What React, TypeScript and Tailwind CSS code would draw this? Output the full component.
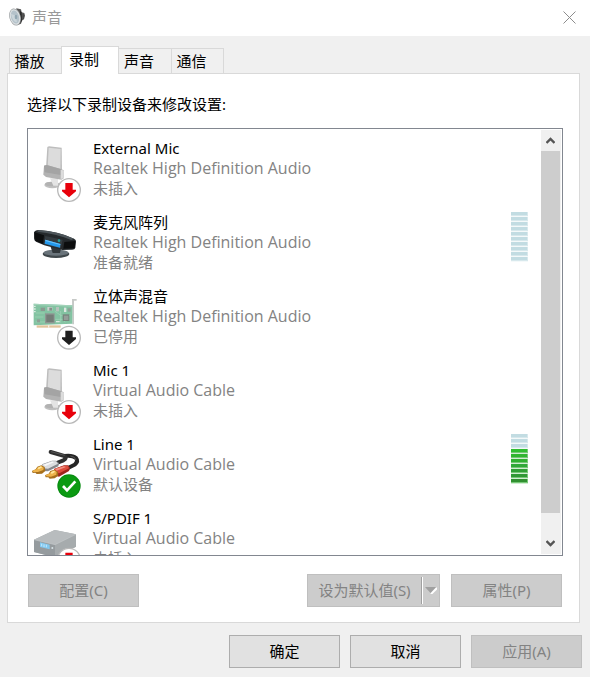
import { useRef, useState } from "react";
import type { ReactNode } from "react";

type BadgeKind = "unplugged" | "disabled" | "default";

function Badge({ kind, x, y }: { kind: BadgeKind; x: number; y: number }) {
  if (kind === "default") {
    return (
      <g transform={`translate(${x} ${y})`}>
        <circle r="35" fill="#078a10" />
        <circle r="32" fill="#0b9a12" />
        <path d="M-18 0 L-6 13 L19 -14" fill="none" stroke="#fff" strokeWidth="8" />
      </g>
    );
  }
  return (
    <g transform={`translate(${x} ${y})`}>
      <circle r="34" fill="#fff" stroke="#b9b9b9" strokeWidth="4" />
      <path
        d="M-11 -21 H11 V-1 H21 V4 L0 22 L-21 4 V-1 H-11 Z"
        fill={kind === "unplugged" ? "#e8000b" : "#1f1f1f"}
      />
    </g>
  );
}

function DeviceIcon({ viewBox, children }: { viewBox: string; children: ReactNode }) {
  return (
    <svg viewBox={viewBox} className="h-16 w-[52px] shrink-0" aria-hidden="true">
      {children}
    </svg>
  );
}

function MicIcon() {
  return (
    <DeviceIcon viewBox="36 39 156 192">
      <ellipse cx="97" cy="180" rx="24" ry="10" fill="#c0c0c0" />
      <ellipse cx="95" cy="177" rx="20" ry="7" fill="#b2b2b2" />
      <path d="M90 160 H114 V182 H100 Z" fill="#e4e4e4" />
      <path d="M82 66 L87 64 L125 68 L126 136 L78 128 Z" fill="#bdbdbd" />
      <path d="M86 68 L122 72 L121 134 L83 128 Z" fill="#dcdcdc" />
      <path d="M72 122 L80 120 L122 132 L132 136 L131 160 L124 164 L78 156 L70 149 Z" fill="#b3b3b3" />
      <path d="M72 122 L80 120 L122 132 L122 150 L74 142 Z" fill="#a4a4a4" />
      <path d="M122 135 L132 136 L131 160 L122 162 Z" fill="#dcdcdc" />
      <Badge kind="unplugged" x={147} y={195} />
    </DeviceIcon>
  );
}

function MicArrayIcon() {
  return (
    <DeviceIcon viewBox="36 261 156 192">
      <ellipse cx="108" cy="387" rx="40" ry="12" fill="#3f474b" />
      <ellipse cx="108" cy="383" rx="37" ry="9" fill="#69737a" />
      <path d="M92 366 H124 L120 384 H98 Z" fill="#30363a" />
      <path d="M42 322 Q44 316 56 315 Q112 318 162 341 Q169 344 168 350 L166 368 Q164 375 154 374 L127 375 L73 361 L48 350 Q42 347 42 340 Z" fill="#25292c" />
      <path d="M56 315 Q112 318 162 341 L154 345 Q108 325 52 320 Z" fill="#4d555a" />
      <path d="M44 322 L72 331 L69 357 L46 347 Z" fill="#0c0d0e" />
      <path d="M133 351 L166 348 L164 370 L130 371 Z" fill="#0c0d0e" />
      <path d="M76 333 L128 344 L122 370 L71 358 Z" fill="#343b40" />
      <path d="M76 344 L121 357 L120 368 L74 356 Z" fill="#2398ec" />
      <path d="M76 344 L121 357 L121 360 L76 348 Z" fill="#67c2fa" />
      <circle cx="117" cy="347" r="4" fill="#259e9c" />
    </DeviceIcon>
  );
}

function SoundCardIcon() {
  return (
    <DeviceIcon viewBox="36 3 156 192">
      <path d="M156 42 H170 V47 H162 V118 H157 Z" fill="#c6c9c7" />
      <path d="M41 56 L157 61 V116 L41 121 Z" fill="#83c3a2" />
      <path d="M41 56 L157 61 V65 L41 60 Z" fill="#a2d3b9" />
      <path d="M50 121 H122 V128 H50 Z" fill="#e1c39b" />
      <path d="M86 121 V128" stroke="#f5eee2" strokeWidth="4" />
      <path d="M45 96 H70 M48 84 H74 M104 78 L123 92 H150 M106 103 H126 L136 111 M47 111 H76 M122 78 V113" fill="none" stroke="#a3d4ba" strokeWidth="2" />
      <rect x="75" y="85" width="29" height="30" fill="#8e9692" />
      <rect x="79" y="89" width="22" height="22" fill="#747d78" />
      <rect x="128" y="88" width="20" height="20" fill="#77847d" />
      <rect x="132" y="92" width="13" height="13" fill="#949d98" />
      <rect x="62" y="68" width="13" height="10" fill="#8a9990" />
      <rect x="82" y="66" width="15" height="11" fill="#cad1cd" />
      <rect x="88" y="68" width="8" height="9" fill="#849189" />
      <rect x="108" y="66" width="9" height="13" fill="#b7c3bc" />
      <rect x="132" y="68" width="7" height="13" fill="#dce6e0" />
      <rect x="143" y="70" width="9" height="10" fill="#8fa096" />
      <rect x="51" y="103" width="9" height="9" fill="#8fa096" />
      <path d="M42 64 H47 M42 72 H47 M42 80 H47 M108 110 H119" stroke="#dceae2" strokeWidth="4" />
      <Badge kind="disabled" x={147} y={158} />
    </DeviceIcon>
  );
}

function CableIcon() {
  return (
    <DeviceIcon viewBox="36 27 156 192">
      <path d="M134 93 Q157 90 168 99 Q176 109 164 119 L144 129" fill="none" stroke="#252525" strokeWidth="12" strokeLinecap="round" />
      <path d="M92 81 L134 93 Q142 99 130 106 L110 114" fill="none" stroke="#303030" strokeWidth="12" strokeLinecap="round" />
      <path d="M93 80 L134 91 M151 93 Q165 94 168 105" fill="none" stroke="#555" strokeWidth="3" />
      <path d="M66 118 L96 107 L108 107 L117 114 L115 124 L84 139 L68 138 Z" fill="#85888c" />
      <path d="M66 119 L96 108 L108 109 L114 116 L84 131 L70 130 Z" fill="#dddee0" />
      <path d="M70 119 L96 110 L102 112 L76 123 Z" fill="#f8f8f9" />
      <path d="M36 138 L47 133 L52 125 L64 121 L74 126 L76 138 L66 146 L50 147 L46 143 L38 144 Z" fill="#a66f1c" />
      <path d="M37 137 L49 133 L53 127 L64 123 L71 128 L70 135 L54 141 L40 141 Z" fill="#edb34b" />
      <path d="M53 129 L62 124 L67 127 L56 133 Z" fill="#ffe69c" />
      <path d="M102 132 L132 121 L144 121 L150 128 L147 138 L117 155 L103 151 Z" fill="#9f241b" />
      <path d="M102 132 L132 122 L144 123 L147 130 L118 145 L104 144 Z" fill="#dd4c3c" />
      <path d="M105 132 L132 124 L138 126 L110 137 Z" fill="#f39182" />
      <path d="M75 151 L86 146 L91 138 L103 134 L114 140 L115 152 L104 160 L89 161 L85 157 L77 157 Z" fill="#a66f1c" />
      <path d="M76 150 L88 146 L93 140 L103 136 L110 141 L109 149 L93 155 L79 154 Z" fill="#edb34b" />
      <path d="M92 142 L101 137 L106 140 L95 147 Z" fill="#ffe69c" />
      <Badge kind="default" x={147} y={183} />
    </DeviceIcon>
  );
}

function SpdifIcon() {
  return (
    <DeviceIcon viewBox="36 249 156 192">
      <path d="M42 344 L104 315 L168 328 L168 365 L105 397 L42 381 Z" fill="#a6abad" />
      <path d="M42 344 L104 315 L168 328 L105 360 Z" fill="#b8bcbe" />
      <path d="M42 344 L105 359 V397 L42 381 Z" fill="#959b9e" />
      <path d="M105 359 L168 328 V365 L105 397 Z" fill="#a6abad" />
      <path d="M42 344 L105 359 L168 328" fill="none" stroke="#c3c7c9" strokeWidth="2" />
      <path d="M60 352 L89 359 V373 L60 366 Z" fill="#82c8ef" />
      <path d="M65 356 V364 M72 358 V366 M79 359 V367" stroke="#c4e8fc" strokeWidth="3" />
      <circle cx="97" cy="369" r="3" fill="#d7e3e6" />
      <Badge kind="unplugged" x={147} y={404} />
    </DeviceIcon>
  );
}

const litSegments = [
  "bg-[#30bd30]",
  "bg-[#30b530]",
  "bg-[#30b030]",
  "bg-[#30a838]",
  "bg-[#309f35]",
  "bg-[#309835]",
  "bg-[#309030]",
];

function LevelMeter({ level }: { level: number }) {
  return (
    <div
      className="flex w-[17px] flex-col"
      role="meter"
      aria-label="音量级别"
      aria-valuemin={0}
      aria-valuemax={10}
      aria-valuenow={level}
    >
      {Array.from({ length: 10 }, (_, i) => {
        const on = i >= 10 - level;
        return (
          <div key={i} className={`h-[5px] border-b ${on ? "border-[#d2edd2]" : "border-[#f4f9fa]"}`}>
            <div
              className={`h-1 border-r border-b ${
                on ? `${litSegments[i - 3]} border-[#78c878]` : "border-[#d7e8ec] bg-[#c2dce2]"
              }`}
            />
          </div>
        );
      })}
    </div>
  );
}

const devices: { name: string; driver: string; status: string; icon: ReactNode; level?: number }[] = [
  { name: "External Mic", driver: "Realtek High Definition Audio", status: "未插入", icon: <MicIcon /> },
  { name: "麦克风阵列", driver: "Realtek High Definition Audio", status: "准备就绪", icon: <MicArrayIcon />, level: 0 },
  { name: "立体声混音", driver: "Realtek High Definition Audio", status: "已停用", icon: <SoundCardIcon /> },
  { name: "Mic 1", driver: "Virtual Audio Cable", status: "未插入", icon: <MicIcon /> },
  { name: "Line 1", driver: "Virtual Audio Cable", status: "默认设备", icon: <CableIcon />, level: 7 },
  { name: "S/PDIF 1", driver: "Virtual Audio Cable", status: "未插入", icon: <SpdifIcon /> },
];

function PushButton({ children, disabled = false }: { children: ReactNode; disabled?: boolean }) {
  return (
    <button
      type="button"
      disabled={disabled}
      className="h-[33px] w-[111px] border border-[#adadad] bg-[#e1e1e1] pb-0.5 disabled:border-[#bfbfbf] disabled:bg-[#cccccc] disabled:text-[#838383]"
    >
      {children}
    </button>
  );
}

function SpeakerIcon() {
  return (
    <svg viewBox="0 0 48 54" className="h-[18px] w-4" aria-hidden="true">
      <path d="M22 1 L36 4 L38 13 L46 15 L48 23 L45 34 L40 37 L36 47 L24 52 Z" fill="#5a5a5a" />
      <path d="M33 8 L38 13 L39 38 L33 44 Z" fill="#2c2c2c" />
      <path d="M41 17 L46 20 L44 32 L40 35 Z" fill="#4a4a4a" />
      <ellipse cx="18" cy="27" rx="17" ry="26" fill="#a0a4a6" transform="rotate(-14 18 27)" />
      <ellipse cx="18" cy="27" rx="15" ry="24" fill="#dde1e3" transform="rotate(-14 18 27)" />
      <ellipse cx="18" cy="27" rx="12" ry="20" fill="#b5c2ca" transform="rotate(-14 18 27)" />
      <path d="M6 17 L20 23 L24 43 Q10 41 6 17 Z" fill="#cbd5da" />
      <ellipse cx="21" cy="27" rx="4" ry="7" fill="#93a7b3" />
    </svg>
  );
}

const tabs = ["播放", "录制", "声音", "通信"];

const tabWidths = ["w-[52px] border-r-0", "w-[58px]", "w-[52px] border-x-0", "w-[53px]"];

export default function App() {
  const [active, setActive] = useState(1);
  const list = useRef<HTMLUListElement>(null);
  const scroll = (distance: number) => list.current?.scrollBy({ top: distance });

  return (
    <main className="min-h-screen bg-[#f0f0f0] pb-[9px] font-['Noto_Sans','Noto_Sans_CJK_SC',sans-serif] text-[15px] leading-5 text-black">
      <header className="flex h-9 items-center bg-white pr-[13px] pb-0.5 pl-[9px]">
        <SpeakerIcon />
        <h1 className="ml-[7px] flex-1 text-[#999999]">声音</h1>
        <button type="button" aria-label="关闭" className="flex size-4 items-center justify-center">
          <svg viewBox="0 0 13 13" className="size-[13px]" fill="none" stroke="#8c8c8c" aria-hidden="true">
            <path d="M.5 .5 L12.5 12.5 M12.5 .5 L.5 12.5" />
          </svg>
        </button>
      </header>

      <div className="px-[7px] pt-[10px]">
        <div role="tablist" className="flex h-7 items-end pl-0.5">
          {tabs.map((tab, i) => (
            <button
              key={tab}
              type="button"
              role="tab"
              aria-selected={i === active}
              onClick={() => setActive(i)}
              className={
                i === active
                  ? "relative z-10 h-7 w-[58px] border border-b-0 border-[#d9d9d9] bg-white pr-3 pb-1"
                  : `h-[26px] border border-[#d9d9d9] pr-3 ${tabWidths[i]}`
              }
            >
              {tab}
            </button>
          ))}
        </div>

        <section
          role="tabpanel"
          className="-mt-px mr-[3px] border border-[#d9d9d9] bg-white pt-5 pr-4 pb-[15px] pl-[19px]"
        >
          <p id="device-label">选择以下录制设备来修改设置:</p>

          <div className="mt-[14px] flex h-[428px] border border-[#828790]">
            <ul
              ref={list}
              aria-labelledby="device-label"
              className="h-full min-w-0 flex-1 overflow-y-auto pt-[9px] [scrollbar-width:none]"
            >
              {devices.map((device) => (
                <li key={device.name} className="flex h-[74px] pr-[13px] pl-1">
                  {device.icon}
                  <div className="ml-[9px] flex-1">
                    <p>{device.name}</p>
                    <p className="font-['Open_Sans',sans-serif] text-base leading-5 text-[#838383]">{device.driver}</p>
                    <p className="text-[#838383]">{device.status}</p>
                  </div>
                  {device.level !== undefined && <LevelMeter level={device.level} />}
                </li>
              ))}
            </ul>
            <div className="my-px mr-px flex w-5 flex-col bg-[#f0f0f0] pr-px">
              <button
                type="button"
                aria-label="向上滚动"
                onClick={() => scroll(-74)}
                className="flex h-[21px] items-center justify-center"
              >
                <svg viewBox="0 0 9 7" className="h-[7px] w-[9px]" fill="none" stroke="#555" strokeWidth="2.4" aria-hidden="true">
                  <path d="M.5 6 L4.5 2 L8.5 6" />
                </svg>
              </button>
              <div className="h-[362px] bg-[#cdcdcd]" />
              <button
                type="button"
                aria-label="向下滚动"
                onClick={() => scroll(74)}
                className="mt-auto flex h-[21px] items-center justify-center"
              >
                <svg viewBox="0 0 9 7" className="h-[7px] w-[9px]" fill="none" stroke="#555" strokeWidth="2.4" aria-hidden="true">
                  <path d="M.5 1 L4.5 5 L8.5 1" />
                </svg>
              </button>
            </div>
          </div>

          <div className="mt-[18px] flex px-px">
            <PushButton disabled>配置(C)</PushButton>
            <div className="mr-[11px] ml-auto flex h-[33px] w-[133px] border border-[#bfbfbf] bg-[#cccccc]">
              <button type="button" disabled className="flex-1 pb-0.5 text-[#838383]">
                设为默认值(S)
              </button>
              <button
                type="button"
                disabled
                aria-label="更多默认选项"
                className="my-0.5 flex w-[18px] items-center justify-center border-l border-[#a0a0a0] shadow-[inset_1px_0_0_#fff]"
              >
                <svg viewBox="0 0 12 7" className="h-[7px] w-3" aria-hidden="true">
                  <path d="M6 7 L12 1" stroke="#fff" strokeWidth="2" />
                  <path d="M0 0 H11 L5.5 6 Z" fill="#a0a0a0" />
                </svg>
              </button>
            </div>
            <PushButton disabled>属性(P)</PushButton>
          </div>
        </section>
      </div>

      <footer className="mt-3 flex justify-end gap-2.5 pr-2">
        <PushButton>确定</PushButton>
        <PushButton>取消</PushButton>
        <PushButton disabled>应用(A)</PushButton>
      </footer>
    </main>
  );
}
